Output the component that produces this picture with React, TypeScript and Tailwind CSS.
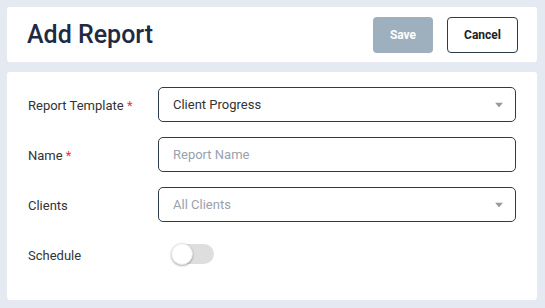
const fields = [
  { label: "Report Template", required: true, kind: "select", value: "Client Progress", placeholder: false },
  { label: "Name", required: true, kind: "input", value: "Report Name", placeholder: true },
  { label: "Clients", required: false, kind: "select", value: "All Clients", placeholder: true },
]

function Caret() {
  return (
    <svg width="8" height="5" viewBox="0 0 8 5" className="absolute right-[12px] top-1/2 -translate-y-1/2">
      <path d="M0 0 L8 0 L4 5 Z" fill="#9a9a9a" />
    </svg>
  )
}

export default function App() {
  return (
    <div className="w-[545px] h-[308px] bg-[#e5e9f2] pt-[7px] pl-[7px] pr-[8px] font-['Roboto',sans-serif]">
      <div className="h-[55px] bg-white rounded-[3px] flex items-center pl-[20px] pr-[19px]">
        <h1 className="text-[25px] font-medium text-[#1f2a44] flex-1 leading-none">Add Report</h1>
        <button className="w-[60px] h-[36px] rounded-[4px] bg-[#9eafbd] text-white text-[12px] font-bold">Save</button>
        <button className="ml-[14px] w-[71px] h-[36px] rounded-[4px] border border-[#2e3b4a] bg-white text-[#222] text-[12px] font-bold">Cancel</button>
      </div>
      <div className="mt-[10px] h-[228px] bg-white rounded-[3px] pt-[15px] pl-[21px] pr-[21px]">
        <div className="flex flex-col gap-[15px]">
          {fields.map((f) => (
            <div key={f.label} className="flex items-center h-[35px]">
              <div className="w-[130px] pt-[3px] text-[13px] text-[#333]">
                {f.label}
                {f.required && <span className="text-[#e53935]"> *</span>}
              </div>
              <div className="relative flex-1 h-[35px] border border-[#2e3b4a] rounded-[5px] flex items-center pl-[14px]">
                <span className={f.placeholder ? "text-[13px] text-[#9aa1ad]" : "text-[13px] text-[#333]"}>{f.value}</span>
                {f.kind === "select" && <Caret />}
              </div>
            </div>
          ))}
          <div className="flex items-center h-[22px] mt-[6px]">
            <div className="w-[130px] pt-[3px] text-[13px] text-[#333]">Schedule</div>
            <div className="relative ml-[14px] w-[42px] h-[20px] rounded-full bg-[#dedede]">
              <div className="absolute -left-[1px] top-[-1px] w-[22px] h-[22px] rounded-full bg-white border border-[#e5e5e5] shadow-[0_1px_2px_rgba(0,0,0,0.3)]" />
            </div>
          </div>
        </div>
      </div>
    </div>
  )
}
